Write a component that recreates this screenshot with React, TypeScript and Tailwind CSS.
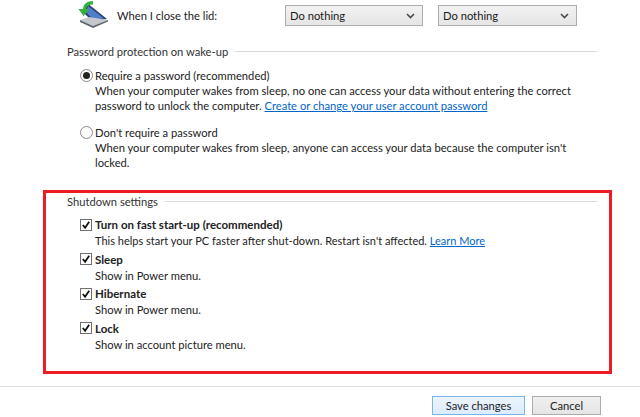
const FONT = "font-['Lato','Noto_Sans',sans-serif]";

function LaptopIcon() {
  return (
    <svg width="32" height="28" viewBox="0 0 32 28" className="shrink-0">
      {/* lid */}
      <path d="M9 3 L29 19 L14 21 L6 13 Z" fill="#27406f" />
      <path d="M10 6 L26 18.5 L15 19.5 L8 12 Z" fill="#4f7fc8" />
      {/* base */}
      <path d="M2 20 L11 17 L30 20 L15 26 Z" fill="#c4c8cc" />
      <path d="M2 20 L15 26 L30 20 L30 21.5 L15 28 L2 22 Z" fill="#5f6670" />
      {/* arrow */}
      <path d="M15 1 C9 1 5.5 4 5 9 L0.5 9 L5.5 16 L11.5 9 L8 9 C8.5 6 11 4.5 15 4.5 Z" fill="#35b03c" />
    </svg>
  );
}

function Chevron() {
  return (
    <svg width="9" height="6" viewBox="0 0 9 6" className="shrink-0">
      <path d="M1 1 L4.5 4.5 L8 1" fill="none" stroke="#4a4a4a" strokeWidth="1.6" />
    </svg>
  );
}

function FakeSelect({ width }: { width: string }) {
  return (
    <div className={`flex h-[21px] items-center justify-between border border-[#adadad] bg-gradient-to-b from-[#f2f2f2] to-[#e5e5e5] pl-1 pr-[7px] text-[#1a1a1a] ${width}`}>
      <span>Do nothing</span>
      <Chevron />
    </div>
  );
}

function GroupHeading({ label }: { label: string }) {
  return (
    <div className="flex h-[16px] items-center gap-[7px] text-[#333]">
      <span>{label}</span>
      <div className="h-px flex-1 bg-[#d9d9d9]" />
    </div>
  );
}

function Radio({ on }: { on?: boolean }) {
  return (
    <div className="flex h-[13px] w-[13px] shrink-0 items-center justify-center rounded-full border border-[#8a8a8a] bg-white">
      {on && <div className="h-[7px] w-[7px] rounded-full bg-[#222]" />}
    </div>
  );
}

function Checkbox() {
  return (
    <div className="flex h-[12px] w-[12px] shrink-0 items-center justify-center border border-[#707070] bg-white">
      <svg width="10" height="10" viewBox="0 0 11 11">
        <path d="M2 5.5 L4.5 8.5 L9 2" fill="none" stroke="#111" strokeWidth="2" />
      </svg>
    </div>
  );
}

const SHUTDOWN = [
  { title: "Sleep", desc: "Show in Power menu." },
  { title: "Hibernate", desc: "Show in Power menu." },
  { title: "Lock", desc: "Show in account picture menu." },
];

export default function App() {
  return (
    <div className={`flex h-[417px] w-[640px] flex-col overflow-hidden bg-white text-[11.2px] leading-[15px] text-[#222] ${FONT}`}>
      {/* lid row */}
      <div className="mt-[5px] flex h-[21px] items-center pl-[78px]">
        <div className="-mt-[3px]"><LaptopIcon /></div>
        <span className="ml-[7px] w-[168px] text-[#222]">When I close the lid:</span>
        <FakeSelect width="w-[138px]" />
        <div className="w-[15px]" />
        <FakeSelect width="w-[139px]" />
      </div>

      {/* password */}
      <div className="mt-[17px] w-[597px] pl-[67px]">
        <GroupHeading label="Password protection on wake-up" />
      </div>
      <div className="mt-[9px] flex gap-[2px] pl-[80px]">
        <div className="mt-px"><Radio on /></div>
        <div className="w-[520px] whitespace-nowrap">
          <div>Require a password (recommended)</div>
          <div>When your computer wakes from sleep, no one can access your data without entering the correct</div>
          <div>password to unlock the computer. <span className="text-[#0066cc] underline">Create or change your user account password</span></div>
        </div>
      </div>
      <div className="mt-[12px] flex gap-[2px] pl-[80px]">
        <div className="mt-px"><Radio /></div>
        <div className="w-[520px] whitespace-nowrap">
          <div>Don't require a password</div>
          <div>When your computer wakes from sleep, anyone can access your data because the computer isn't</div>
          <div>locked.</div>
        </div>
      </div>

      {/* shutdown, outlined in red */}
      <div className="mt-[20px] ml-[43px] h-[184px] w-[569px] border-[3px] border-[#ed1c24] pl-[21px] pr-[12px]">
        <GroupHeading label="Shutdown settings" />
        <div className="mt-[8px] pl-[13px]">
          <div className="flex items-center gap-[3px] text-[11.5px] font-bold">
            <Checkbox />
            <span>Turn on fast start-up (recommended)</span>
          </div>
          <div className="mt-px pl-[15px] text-[11px]">
            This helps start your PC faster after shut-down. Restart isn't affected. <span className="text-[#0066cc] underline">Learn More</span>
          </div>
          {SHUTDOWN.map((s) => (
            <div key={s.title} className="mt-[3.5px]">
              <div className="flex items-center gap-[3px] text-[11.5px] font-bold">
                <Checkbox />
                <span>{s.title}</span>
              </div>
              <div className="mt-px pl-[15px]">{s.desc}</div>
            </div>
          ))}
        </div>
      </div>

      {/* footer */}
      <div className="mt-[12px] h-px bg-[#dfdfdf]" />
      <div className="mt-[9px] flex gap-[7px] pl-[432px]">
        <button className="h-[19px] w-[93px] border border-[#7eb4ea] bg-gradient-to-b from-[#ecf4fc] to-[#dcecfc] text-[#222]">Save changes</button>
        <button className="h-[19px] w-[69px] border border-[#acacac] bg-gradient-to-b from-[#f0f0f0] to-[#e5e5e5] text-[#222]">Cancel</button>
      </div>
    </div>
  );
}
